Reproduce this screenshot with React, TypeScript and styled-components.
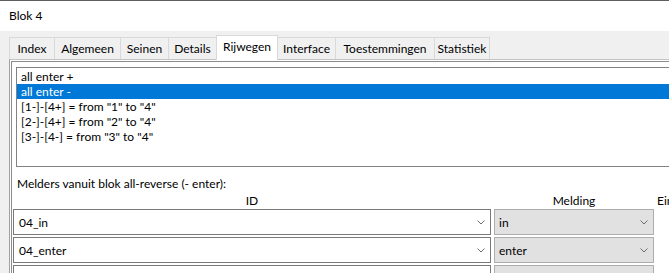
import styled, { createGlobalStyle } from "styled-components";

const GlobalStyle = createGlobalStyle`
  html, body {
    margin: 0;
    padding: 0;
    width: 669px;
    height: 273px;
    overflow: hidden;
    background: #f0f0f0;
  }
  body {
    font-family: Lato, "Noto Sans", sans-serif;
    font-size: 12px;
    color: #000;
  }
`;

interface TabDef {
  label: string;
  width: number;
}

const tabs: TabDef[] = [
  { label: "Index", width: 45 },
  { label: "Algemeen", width: 66 },
  { label: "Seinen", width: 48 },
  { label: "Details", width: 48 },
  { label: "Rijwegen", width: 62 },
  { label: "Interface", width: 57 },
  { label: "Toestemmingen", width: 99 },
  { label: "Statistiek", width: 56 }
];

const activeTab = 4;

const routes = [
  "all enter +",
  "all enter -",
  '[1-]-[4+] = from "1" to "4"',
  '[2-]-[4+] = from "2" to "4"',
  '[3-]-[4-] = from "3" to "4"'
];

const selectedRoute = 1;

const melders = [
  { id: "04_in", melding: "in" },
  { id: "04_enter", melding: "enter" },
  { id: "", melding: "" }
];

function Chevron() {
  return (
    <svg width="8" height="5" viewBox="0 0 8 5">
      <path d="M0.5 0.5 L4 4 L7.5 0.5" fill="none" stroke="#6d6d6d" strokeWidth="1" />
    </svg>
  );
}

export default function App() {
  return (
    <Window>
      <GlobalStyle />
      <TitleBar>Blok 4</TitleBar>
      <Body>
        <TabStrip>
          {tabs.map((t, i) => (
            <Tab
              key={t.label}
              $width={t.width}
              $active={i === activeTab}
              $afterActive={i === activeTab + 1}
              $last={i === tabs.length - 1}
            >
              {t.label}
            </Tab>
          ))}
        </TabStrip>
        <TabPage>
          <Frame>
            <ListBox>
              {routes.map((r, i) => (
                <ListItem key={r} $selected={i === selectedRoute}>
                  {r}
                </ListItem>
              ))}
            </ListBox>
            <Caption>Melders vanuit blok all-reverse (- enter):</Caption>
            <Grid>
              <HeaderCell $align="center">ID</HeaderCell>
              <HeaderCell $align="center">Melding</HeaderCell>
              <HeaderCell $align="left">Einde</HeaderCell>
              {melders.map((m, i) => (
                <Row key={i}>
                  <Combo $variant="edit">
                    <ComboText>{m.id}</ComboText>
                    <Chevron />
                  </Combo>
                  <Combo $variant="list">
                    <ComboText>{m.melding}</ComboText>
                    <Chevron />
                  </Combo>
                  <span />
                </Row>
              ))}
            </Grid>
          </Frame>
        </TabPage>
      </Body>
    </Window>
  );
}

const Window = styled.div`
  width: 760px;
  display: flex;
  flex-direction: column;
`;

const TitleBar = styled.div`
  flex-shrink: 0;
  box-sizing: border-box;
  height: 31px;
  border-top: 1px solid #5f5f5f;
  background: #fff;
  display: flex;
  align-items: center;
  padding-left: 9px;
  padding-bottom: 1px;
`;

const Body = styled.div`
  flex-shrink: 0;
  height: 300px;
  background: #f0f0f0;
  padding-left: 9px;
  display: flex;
  flex-direction: column;
`;

const TabStrip = styled.div`
  flex-shrink: 0;
  height: 28px;
  display: flex;
  align-items: flex-end;
`;

const Tab = styled.div<{
  $width: number;
  $active: boolean;
  $afterActive: boolean;
  $last: boolean;
}>`
  box-sizing: border-box;
  flex-shrink: 0;
  width: ${({ $width }) => $width}px;
  height: ${({ $active }) => ($active ? 25 : 22)}px;
  margin-bottom: ${({ $active }) => ($active ? -1 : 0)}px;
  position: relative;
  z-index: ${({ $active }) => ($active ? 2 : 0)};
  background: ${({ $active }) => ($active ? "#fff" : "#f0f0f0")};
  border-top: 1px solid #d9d9d9;
  border-left: ${({ $afterActive }) => ($afterActive ? "none" : "1px solid #d9d9d9")};
  border-right: ${({ $active, $last }) => ($active || $last ? "1px solid #d9d9d9" : "none")};
  display: flex;
  align-items: center;
  justify-content: center;
  padding-bottom: ${({ $active }) => ($active ? 3 : 0)}px;
  white-space: nowrap;
`;

const TabPage = styled.div`
  flex: 1;
  background: #fff;
  border-top: 1px solid #c4c4c4;
  border-left: 1px solid #a0a0a0;
  padding: 1px 0 0 1px;
  display: flex;
`;

const Frame = styled.div`
  flex: 1;
  border-top: 1px solid #8c8c8c;
  border-left: 1px solid #8c8c8c;
  display: flex;
  flex-direction: column;
`;

const ListBox = styled.div`
  flex-shrink: 0;
  box-sizing: border-box;
  height: 100px;
  margin: 5px 0 0 4px;
  border: 1px solid #828282;
  padding-top: 1px;
  background: #fff;
`;

const ListItem = styled.div<{ $selected: boolean }>`
  height: 15px;
  line-height: 15px;
  padding-left: 4px;
  white-space: nowrap;
  background: ${({ $selected }) => ($selected ? "#0078d7" : "transparent")};
  color: ${({ $selected }) => ($selected ? "#fff" : "#000")};
`;

const Caption = styled.div`
  flex-shrink: 0;
  margin: 9px 0 0 5px;
  height: 15px;
  line-height: 15px;
`;

const Grid = styled.div`
  flex-shrink: 0;
  margin: 2px 0 0 1px;
  display: grid;
  grid-template-columns: 478px 160px 100px;
  grid-template-rows: 16px;
  column-gap: 3px;
`;

const HeaderCell = styled.div<{ $align: "center" | "left" }>`
  height: 16px;
  line-height: 16px;
  text-align: ${({ $align }) => $align};
  margin-bottom: 6px;
`;

const Row = styled.div`
  display: contents;
`;

const Combo = styled.div<{ $variant: "edit" | "list" }>`
  box-sizing: border-box;
  height: 26px;
  margin-bottom: 2px;
  display: flex;
  align-items: center;
  justify-content: space-between;
  padding: 0 5px 0 ${({ $variant }) => ($variant === "edit" ? 5 : 4)}px;
  background: ${({ $variant }) => ($variant === "edit" ? "#fff" : "#e1e1e1")};
  border: 1px solid ${({ $variant }) => ($variant === "edit" ? "#7a7a7a" : "#adadad")};
`;

const ComboText = styled.span`
  white-space: nowrap;
`;
